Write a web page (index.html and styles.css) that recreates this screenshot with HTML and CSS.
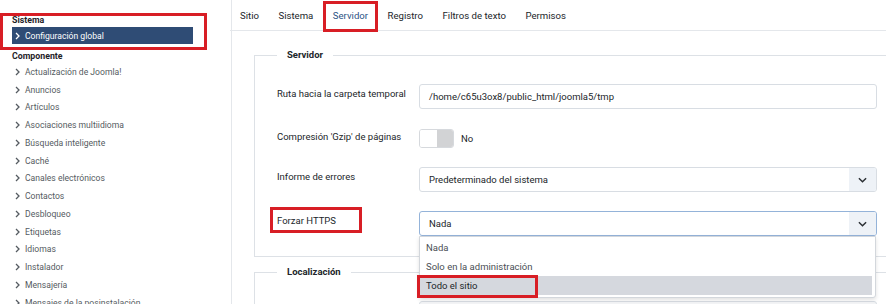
FILE: index.html
```html
<!DOCTYPE html>
<html lang="es">
<head>
<meta charset="utf-8">
<title>Configuración global</title>
<link rel="stylesheet" href="styles.css">
</head>
<body>
<div class="page">
  <aside class="sidebar">
    <div class="group">
      <h3 class="heading">Sistema</h3>
      <a class="item active"><svg class="chev" viewBox="0 0 5 8"><path d="M1 1l3 3-3 3"/></svg>Configuración global</a>
      <span class="mark mark-side"></span>
    </div>
    <h3 class="heading heading-comp">Componente</h3>
    <ul class="menu">
      <li class="item"><svg class="chev" viewBox="0 0 5 8"><path d="M1 1l3 3-3 3"/></svg>Actualización de Joomla!</li>
      <li class="item"><svg class="chev" viewBox="0 0 5 8"><path d="M1 1l3 3-3 3"/></svg>Anuncios</li>
      <li class="item"><svg class="chev" viewBox="0 0 5 8"><path d="M1 1l3 3-3 3"/></svg>Artículos</li>
      <li class="item"><svg class="chev" viewBox="0 0 5 8"><path d="M1 1l3 3-3 3"/></svg>Asociaciones multiidioma</li>
      <li class="item"><svg class="chev" viewBox="0 0 5 8"><path d="M1 1l3 3-3 3"/></svg>Búsqueda inteligente</li>
      <li class="item"><svg class="chev" viewBox="0 0 5 8"><path d="M1 1l3 3-3 3"/></svg>Caché</li>
      <li class="item"><svg class="chev" viewBox="0 0 5 8"><path d="M1 1l3 3-3 3"/></svg>Canales electrónicos</li>
      <li class="item"><svg class="chev" viewBox="0 0 5 8"><path d="M1 1l3 3-3 3"/></svg>Contactos</li>
      <li class="item"><svg class="chev" viewBox="0 0 5 8"><path d="M1 1l3 3-3 3"/></svg>Desbloqueo</li>
      <li class="item"><svg class="chev" viewBox="0 0 5 8"><path d="M1 1l3 3-3 3"/></svg>Etiquetas</li>
      <li class="item"><svg class="chev" viewBox="0 0 5 8"><path d="M1 1l3 3-3 3"/></svg>Idiomas</li>
      <li class="item"><svg class="chev" viewBox="0 0 5 8"><path d="M1 1l3 3-3 3"/></svg>Instalador</li>
      <li class="item"><svg class="chev" viewBox="0 0 5 8"><path d="M1 1l3 3-3 3"/></svg>Mensajería</li>
      <li class="item"><svg class="chev" viewBox="0 0 5 8"><path d="M1 1l3 3-3 3"/></svg>Mensajes de la posinstalación</li>
    </ul>
  </aside>
  <main class="main">
    <nav class="tabs">
      <span class="tab">Sitio</span>
      <span class="tab">Sistema</span>
      <span class="tab active">Servidor<span class="mark mark-tab"></span></span>
      <span class="tab">Registro</span>
      <span class="tab">Filtros de texto</span>
      <span class="tab">Permisos</span>
    </nav>
    <div class="content">
      <fieldset class="set">
        <legend class="legend">Servidor</legend>
        <div class="row">
          <label class="label">Ruta hacia la carpeta temporal</label>
          <div class="field">/home/c65u3ox8/public_html/joomla5/tmp</div>
        </div>
        <div class="row row-toggle">
          <label class="label">Compresión 'Gzip' de páginas</label>
          <div class="switch-wrap">
            <span class="switch"><span class="switch-on"></span><span class="switch-off"></span></span>
            <span class="switch-text">No</span>
          </div>
        </div>
        <div class="row">
          <label class="label">Informe de errores</label>
          <div class="field select">Predeterminado del sistema<span class="caret"><svg viewBox="0 0 10 6"><path d="M1 1l4 4 4-4"/></svg></span></div>
        </div>
        <div class="row">
          <label class="label">Forzar HTTPS<span class="mark mark-label"></span></label>
          <div class="select-wrap">
            <div class="field select focus">Nada<span class="caret"><svg viewBox="0 0 10 6"><path d="M1 1l4 4 4-4"/></svg></span></div>
            <ul class="dropdown">
              <li class="opt">Nada</li>
              <li class="opt">Solo en la administración</li>
              <li class="opt hl">Todo el sitio<span class="mark mark-opt"></span></li>
            </ul>
          </div>
        </div>
      </fieldset>
      <fieldset class="set set-second">
        <legend class="legend">Localización</legend>
        <div class="row">
          <span class="label"></span>
          <div class="field field-empty"></div>
        </div>
      </fieldset>
    </div>
  </main>
</div>
</body>
</html>
```
FILE: styles.css
```css
html, body {
  margin: 0;
  padding: 0;
  overflow: hidden;
  background: #ffffff;
  font-family: Roboto, "Noto Sans", "Liberation Sans", Arial, sans-serif;
  color: #22262a;
}

.page {
  display: grid;
  grid-template-columns: 232px 691px;
  width: 923px;
  height: 304px;
}

/* Sidebar */
.sidebar {
  border-right: 1px solid #e4e7eb;
  padding-top: 13px;
  box-sizing: border-box;
}

.group {
  position: relative;
  margin-left: 12px;
  width: 181px;
  padding-bottom: 6px;
}

.heading {
  margin: 0;
  font-size: 8.8px;
  font-weight: 700;
  line-height: 14px;
  color: #1f2328;
}

.heading-comp {
  margin-left: 12px;
  line-height: 13px;
}

.item {
  display: flex;
  align-items: center;
  gap: 5px;
  height: 17.75px;
  padding-left: 3px;
  font-size: 8.6px;
  color: #555b61;
}

.item.active {
  height: 17px;
  background: #2f4c75;
  color: #ffffff;
}

.chev {
  width: 5px;
  height: 8px;
  fill: none;
  stroke: currentColor;
  stroke-width: 1.3;
  flex: none;
}

.menu {
  list-style: none;
  margin: 0 0 0 12px;
  padding: 0;
}

/* Annotation marks */
.mark {
  position: absolute;
  border: 3px solid #d81e25;
  box-sizing: border-box;
  pointer-events: none;
}

.mark-side {
  left: -12px;
  top: 0;
  width: 207px;
  height: 37px;
}

/* Tabs */
.tabs {
  display: flex;
  height: 30px;
  border-bottom: 1px solid #e4e7eb;
  margin-left: -1.75px;
}

.tab {
  position: relative;
  display: flex;
  align-items: center;
  padding: 0 9.75px;
  font-size: 9.6px;
  color: #22262a;
}

.tab.active {
  color: #2c5385;
}

.mark-tab {
  left: 0;
  top: 1px;
  right: 0;
  bottom: -2px;
}

/* Content */
.content {
  padding: 16px 23px 0 22px;
}

.set {
  margin: 0;
  border: 1px solid #dde1e6;
  padding: 21px 22px 20px;
  background: #ffffff;
}

.set-second {
  margin-top: 7px;
}

.legend {
  padding: 0 10px;
  font-size: 9.5px;
  font-weight: 700;
  line-height: 16px;
  color: #22262a;
}

.row {
  display: grid;
  grid-template-columns: 142px 458px;
  margin-bottom: 19px;
}

.row:last-child {
  margin-bottom: 0;
}

.label {
  position: relative;
  padding-top: 3px;
  font-size: 9.5px;
  line-height: 14px;
  color: #22262a;
  justify-self: start;
}

.row-toggle .label {
  padding-top: 2px;
}

.field {
  position: relative;
  display: flex;
  align-items: center;
  height: 25px;
  box-sizing: border-box;
  border: 1px solid #d8dde3;
  border-radius: 3px;
  padding: 0 9px;
  font-size: 9.5px;
  color: #22262a;
  background: #ffffff;
}

.field-empty {
  background: #f3f4f6;
}

.select .caret {
  position: absolute;
  right: 0;
  top: 0;
  bottom: 0;
  width: 27px;
  display: flex;
  align-items: center;
  justify-content: center;
  background: #eef2f7;
  border-radius: 0 2px 2px 0;
}

.caret svg {
  width: 9px;
  height: 6px;
  fill: none;
  stroke: #2a2e33;
  stroke-width: 1.6;
}

.select.focus {
  border-color: #94b3d9;
}

.switch-wrap {
  display: flex;
  align-items: center;
  gap: 7px;
  height: 20px;
}

.switch {
  display: flex;
  width: 35px;
  height: 19px;
  box-sizing: border-box;
  border: 1px solid #d6d9dd;
  border-radius: 3px;
  overflow: hidden;
}

.switch-on {
  flex: 1;
  background: #ffffff;
}

.switch-off {
  flex: 1;
  background: #d2d3d5;
}

.switch-text {
  font-size: 9.5px;
  color: #22262a;
}

.mark-label {
  left: -7px;
  top: -4px;
  width: 92px;
  height: 26px;
}

.select-wrap {
  position: relative;
}

.dropdown {
  position: absolute;
  left: 0;
  top: 25px;
  width: 457px;
  box-sizing: border-box;
  margin: 0;
  padding: 1px 0 2px;
  list-style: none;
  background: #ffffff;
  border: 1px solid #d3d7dc;
  border-radius: 0 0 3px 3px;
  box-shadow: 0 2px 4px rgba(0, 0, 0, 0.12);
  z-index: 2;
}

.opt {
  position: relative;
  display: flex;
  align-items: center;
  height: 19px;
  padding-left: 6px;
  font-size: 9.5px;
  color: #4a4f55;
}

.opt.hl {
  margin-right: 3px;
  background: #d5d8de;
  color: #22262a;
}

.mark-opt {
  left: -3px;
  top: -1px;
  width: 121px;
  height: 23px;
}
```
